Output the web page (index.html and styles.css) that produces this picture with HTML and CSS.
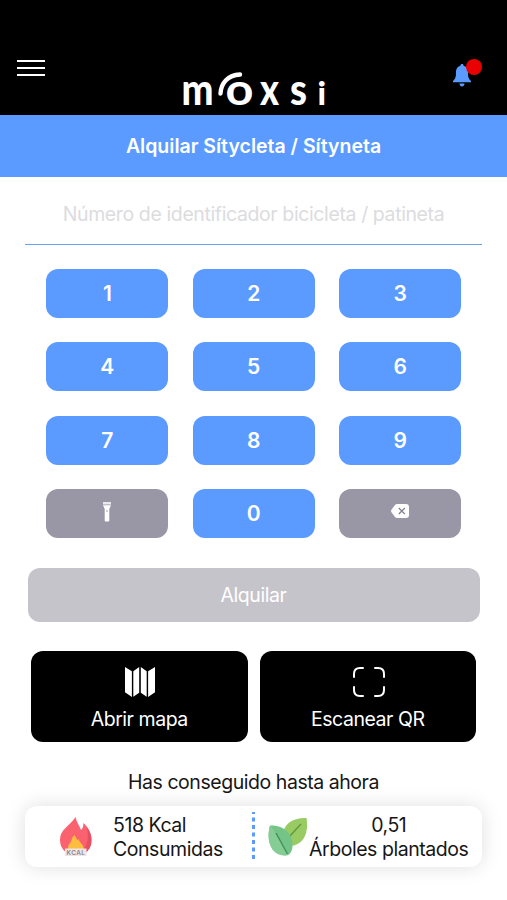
FILE: index.html
```html
<!DOCTYPE html>
<html lang="es">
	<head>
		<meta charset="utf-8">
		<title>Moxsi</title>
		<link rel="stylesheet" href="styles.css">
	</head>

	<body>
		<div class="header">
			<div class="menu">
				<span></span>
				<span></span>
				<span></span>
			</div>
			<svg class="logo" viewBox="0 0 150 55" width="150" height="55">
				<text class="letter" x="3.500" y="45" textLength="32" lengthAdjust="spacingAndGlyphs">m</text>
				<text class="letter ring" x="47.500" y="44.500" textLength="28" lengthAdjust="spacingAndGlyphs">o</text>
				<text class="letter" x="82" y="45" textLength="19" lengthAdjust="spacingAndGlyphs">x</text>
				<text class="letter" x="112" y="45" textLength="17" lengthAdjust="spacingAndGlyphs">s</text>
				<text class="letter small" x="139.500" y="45">i</text>
				<path d="M42.500 33.500C43 23 50 15 62 14.500" fill="none" stroke="#fff" stroke-width="4.400" stroke-linecap="round"/>
			</svg>
			<div class="bell">
				<svg viewBox="0 0 18 24" width="18" height="24">
					<path d="M9 0c1 0 1.600.7 1.600 1.700 3.300.8 4.400 3.600 4.400 7 0 4.500.8 6.300 3 8.300v1.300H0V17c2.200-2 3-3.800 3-8.300 0-3.400 1.100-6.200 4.400-7C7.400.7 8 0 9 0z" fill="#5b9aff"/>
					<path d="M6.500 19.500h5c0 4-5 4-5 0z" fill="#5b9aff"/>
				</svg>
				<span class="badge"></span>
			</div>
		</div>

		<div class="title">Alquilar Sítycleta / Sítyneta</div>

		<div class="field">Número de identificador bicicleta / patineta</div>

		<div class="keyboard">
			<button class="number">1</button>
			<button class="number">2</button>
			<button class="number">3</button>
			<button class="number">4</button>
			<button class="number">5</button>
			<button class="number">6</button>
			<button class="number">7</button>
			<button class="number">8</button>
			<button class="number">9</button>
			<button class="number tool">
				<svg viewBox="0 0 8 20" width="8" height="20">
					<path d="M0 0h8v2.500H0z" fill="#e9e8ee"/>
					<path d="M0 3.200h8L6.300 7v11.500q0 1-1 1H2.700q-1 0-1-1V7z" fill="#fff"/>
					<circle cx="4" cy="9" r=".8" fill="#9996a5"/>
				</svg>
			</button>
			<button class="number">0</button>
			<button class="number tool">
				<svg viewBox="0 0 18 14" width="18" height="14">
					<path d="M6 0h9q3 0 3 3v8q0 3-3 3H6q-1 0-2-1L.6 8.400Q-.5 7 .6 5.600L4 1q1-1 2-1z" fill="#fff"/>
					<path d="M7.800 4l6 6M13.800 4l-6 6" stroke="#85828f" stroke-width="1.300"/>
				</svg>
			</button>
		</div>

		<button class="rent">Alquilar</button>

		<div class="actions">
			<button class="action">
				<svg viewBox="0 0 30 30" width="30" height="30" fill="#fff">
					<path d="M0 0l6.900 4.300V30L0 25.200z"/>
					<path d="M8.300 4.300L14.200 0v25.700L8.300 29.800z"/>
					<path d="M15.800 0l5.900 4.300v25.500l-5.900-4.100z"/>
					<path d="M23.100 4.300L30 0v25.200L23.100 30z"/>
				</svg>
				<span>Abrir mapa</span>
			</button>
			<button class="action">
				<svg viewBox="0 0 32 30" width="32" height="30" fill="none" stroke="#fff" stroke-width="2" stroke-linecap="round">
					<path d="M1 10V7q0-6 6-6h3M22 1h3q6 0 6 6v3M31 20v3q0 6-6 6h-3M10 29H7q-6 0-6-6v-3"/>
				</svg>
				<span>Escanear QR</span>
			</button>
		</div>

		<p class="caption">Has conseguido hasta ahora</p>

		<div class="card">
			<div class="stat kcal">
				<svg viewBox="0 0 32 40" width="32" height="40">
					<path d="M15.500 0c1 5 3.500 8 5.500 13 2-2 2.500-4 2.300-7C28 10 31.500 16 31.500 23c0 9-6 15-15.500 15S0 32 0 23C0 12 9 10 15.500 0z" fill="#fb6270"/>
					<path d="M26.500 10C30 14 31.500 18 31.500 23c0 9-6 15-13 15 8-6 11.500-17 8-28z" fill="#e94f62"/>
					<path d="M8 31c0-4 3-5 3.500-8 .5-2 1-3 3-5 1 2 2 3 2.500 5l1.500-1c0 3 5 5 5 9 0 4-3 6-8 6s-7.500-3-7.500-6z" fill="#fdbd40"/>
					<path d="M5 31.500h21.500V39H5z" fill="#eee5e7"/>
					<text class="tag" x="6.500" y="37.800" textLength="18.500">KCAL</text>
				</svg>
				<div class="info">518 Kcal<br>Consumidas</div>
			</div>
			<svg class="divider" viewBox="0 0 3 50" width="3" height="50">
				<path d="M1.500 0v50" stroke="#5b9aff" stroke-width="3" stroke-dasharray="4 3.500" stroke-dashoffset="2"/>
			</svg>
			<div class="stat trees">
				<svg viewBox="0 0 40 40" width="40" height="40">
					<path d="M38.500 1C25 .5 15 7 15 18c0 5 3 10 8 11 13-1 18-14 15.500-28z" fill="#99cb64"/>
					<path d="M33 7L20 21" stroke="#60993e" stroke-width="1.400"/>
					<path d="M2 8.500C15 8 25 16 24.500 29c0 4-1.500 7-4 9C6 41-3 27 2 8.500z" fill="#74c487"/>
					<path d="M2 8.500C9 17 16 28 20.500 38 6 41-3 27 2 8.500z" fill="#86cd95"/>
					<path d="M8 16l11.500 21" stroke="#408e59" stroke-width="1.400"/>
				</svg>
				<div class="info center">0,51<br>Árboles plantados</div>
			</div>
		</div>
	</body>
</html>
```

FILE: styles.css
```css
body
{
	margin: 0;
	height: 900px;
	overflow: hidden;
	background-color: #fff;
	font-family: Inter, "Liberation Sans", sans-serif;
	font-size: 19.5px;
	letter-spacing: -0.45px;
	color: #161616;
}

button
{
	border: 0;
	padding: 0;
	font-family: inherit;
	font-size: inherit;
	letter-spacing: inherit;
	color: #fff;
}

svg
{
	display: block;
	flex-shrink: 0;
}

.header
{
	display: flex;
	justify-content: space-between;
	align-items: flex-start;
	box-sizing: border-box;
	height: 115px;
	padding: 60px 26px 0 17px;
	background-color: #000;
}

.menu
{
	display: flex;
	flex-direction: column;
	gap: 5px;
	width: 28px;
}

.menu span
{
	height: 2px;
	background-color: #fff;
}

.logo
{
	margin-left: 8px;
}

.letter
{
	font-family: Lato, sans-serif;
	font-weight: 900;
	font-size: 44px;
	letter-spacing: 0;
	fill: #fff;
}

.ring
{
	font-weight: 700;
}

.small
{
	font-size: 33px;
}

.bell
{
	position: relative;
	width: 28px;
	padding-top: 4px;
}

.badge
{
	position: absolute;
	top: -1px;
	right: -1px;
	width: 16px;
	height: 16px;
	border-radius: 50%;
	background-color: #e90000;
}

.title
{
	height: 61.500px;
	line-height: 63px;
	text-align: center;
	font-weight: 600;
	letter-spacing: 0;
	color: #fff;
	background-color: #5b9aff;
}

.field
{
	height: 67px;
	line-height: 75px;
	margin: 0 25px;
	text-align: center;
	letter-spacing: -0.39px;
	color: #dcdcde;
	border-bottom: 1px solid #6ba1e8;
}

.keyboard
{
	display: grid;
	grid-template-columns: repeat(3, 122px);
	gap: 24.400px;
	justify-content: center;
	margin-top: 24.500px;
}

.number
{
	display: flex;
	justify-content: center;
	align-items: center;
	height: 49px;
	border-radius: 12px;
	font-weight: 600;
	font-size: 21px;
	background-color: #5b9aff;
}

.tool
{
	align-items: flex-start;
	padding-top: 13px;
	background-color: #9996a5;
}

.tool svg[width="18"]
{
	margin-top: 2px;
}

.rent
{
	display: block;
	width: 452px;
	height: 54px;
	margin: 30px auto 0;
	border-radius: 12px;
	background-color: #c6c4cb;
}

.actions
{
	display: flex;
	justify-content: center;
	gap: 12px;
	margin-top: 29px;
}

.action
{
	display: flex;
	flex-direction: column;
	align-items: center;
	gap: 10px;
	box-sizing: border-box;
	width: 216.500px;
	height: 91px;
	padding-top: 16px;
	border-radius: 12px;
	background-color: #000;
}

.action svg
{
	margin-left: 2px;
}

.caption
{
	margin: 28px 0 0;
	line-height: 24px;
	text-align: center;
}

.card
{
	display: flex;
	align-items: center;
	height: 61px;
	margin: 12px 25px 0;
	border-radius: 12px;
	background-color: #fff;
	box-shadow: 0 0 20px rgba(0, 0, 0, 0.13);
}

.stat
{
	display: flex;
	align-items: center;
	white-space: nowrap;
	line-height: 24.500px;
}

.kcal
{
	box-sizing: border-box;
	width: 227px;
	padding-left: 35px;
	gap: 21px;
}

.trees
{
	padding-left: 13px;
	gap: 1px;
}

.info
{
	padding-top: 1px;
}

.center
{
	text-align: center;
}

.tag
{
	font-size: 6.500px;
	font-weight: 500;
	letter-spacing: 0;
	fill: #85777c;
}
```
